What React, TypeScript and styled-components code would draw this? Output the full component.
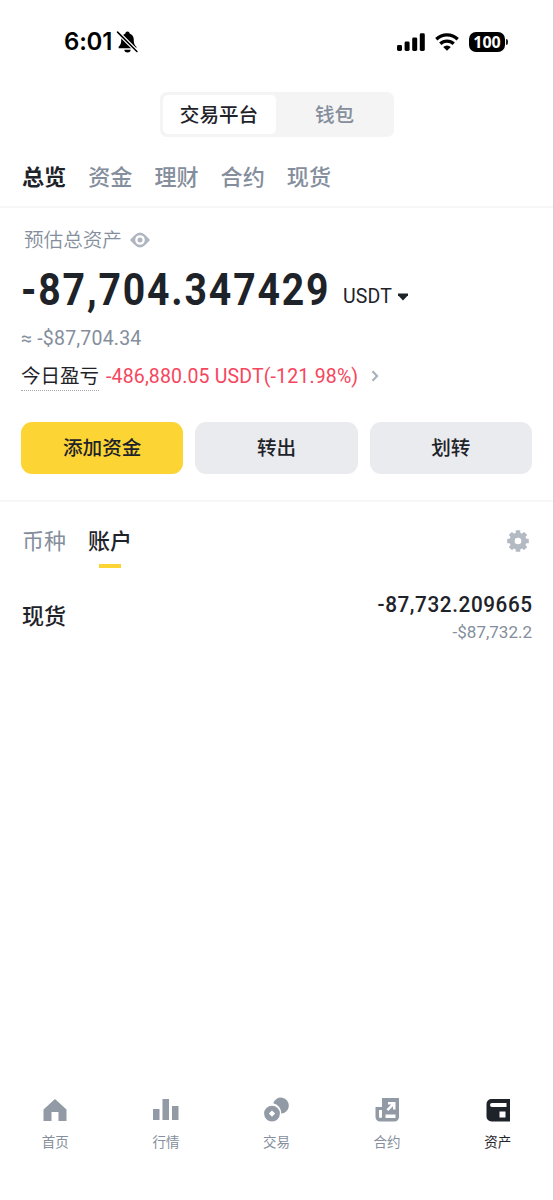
import React from 'react';
import styled, { createGlobalStyle } from 'styled-components';

const ink = '#1e2329';
const slate = '#848e9c';

const GlobalStyle = createGlobalStyle`
  * { box-sizing: border-box; }
  body { margin: 0; background: #fff; }
  button { border: 0; padding: 0; margin: 0; background: none; font: inherit; color: inherit; }
  svg { display: block; flex: none; }
`;

const Screen = styled.div`
  width: 554px;
  height: 1200px;
  display: flex;
  flex-direction: column;
  overflow: hidden;
  background: #fff;
  border-right: 1px solid #cfcfcf;
  color: ${ink};
  font-family: Roboto, 'Noto Sans CJK SC', sans-serif;
  white-space: nowrap;
`;

const StatusBar = styled.header`
  height: 92px;
  padding: 24px 45px 0 64px;
  display: flex;
  align-items: flex-start;
  justify-content: space-between;
  color: #000;
`;

const Clock = styled.div`
  display: flex;
  align-items: center;
  gap: 4px;
  height: 35px;
  font: 560 24px/35px Inter, sans-serif;
  letter-spacing: -0.2px;
`;

const Signals = styled.div`
  display: flex;
  align-items: center;
  height: 35px;
  gap: 10px;
`;

const Battery = styled.div`
  display: flex;
  align-items: center;
  gap: 1px;
`;

const BatteryBody = styled.div`
  width: 36px;
  height: 20px;
  border-radius: 7px;
  background: #000;
  color: #fff;
  text-align: center;
  font: 700 16px/20px 'Open Sans', sans-serif;
`;

const BatteryTip = styled.div`
  width: 2px;
  height: 6px;
  border-radius: 0 2px 2px 0;
  background: #222;
`;

const Segmented = styled.div`
  align-self: center;
  width: 234px;
  height: 45px;
  padding: 3px;
  display: flex;
  border-radius: 7px;
  background: #f4f4f4;
`;

const Segment = styled.button<{ $active?: boolean }>`
  flex: ${p => (p.$active ? '0 0 113px' : '1')};
  padding-top: 2px;
  padding-left: ${p => (p.$active ? '0' : '3px')};
  border-radius: 5px;
  background: ${p => (p.$active ? '#fff' : 'transparent')};
  color: ${p => (p.$active ? ink : slate)};
  font-size: 19.6px;
  font-weight: 500;
  line-height: 37px;
`;

const PrimaryTabs = styled.nav`
  height: 71px;
  padding: 24px 22px 0;
  display: flex;
  gap: 22px;
  border-bottom: 2px solid #f7f7f8;
`;

const PrimaryTab = styled.button<{ $active?: boolean }>`
  height: 32px;
  color: ${p => (p.$active ? ink : slate)};
  font-size: 22.1px;
  font-weight: ${p => (p.$active ? 700 : 500)};
  line-height: 32px;
`;

const Summary = styled.section`
  height: 294px;
  padding: 18px 21px 0;
  display: flex;
  flex-direction: column;
  border-bottom: 2px solid #f7f7f8;
`;

const Caption = styled.div`
  display: flex;
  align-items: center;
  gap: 8px;
  height: 30px;
  padding-left: 3px;
  color: ${slate};
  font-size: 19.6px;
  font-weight: 350;
  line-height: 30px;

  svg {
    margin-top: -2px;
  }
`;

const Balance = styled.div`
  display: flex;
  align-items: baseline;
  height: 60px;
  margin-top: 6px;
`;

const Amount = styled.span`
  width: 322px;
  font-size: 44.5px;
  font-weight: 700;
  line-height: 56px;
  letter-spacing: 2.1px;
  transform: scaleX(0.88);
  transform-origin: left;
`;

const Currency = styled.button`
  display: flex;
  align-items: center;
  gap: 6px;
  font-size: 19.5px;
  line-height: 24px;
  letter-spacing: 0.2px;
  font-weight: 450;
  transform: translateY(-2px);
`;

const Approx = styled.div`
  height: 30px;
  margin-top: 2px;
  color: ${slate};
  font-size: 19.5px;
  line-height: 30px;
  letter-spacing: 0.2px;
`;

const Pnl = styled.div`
  display: flex;
  align-items: flex-start;
  height: 32px;
  margin-top: 7px;
`;

const PnlLabel = styled.span`
  height: 30px;
  padding-top: 1px;
  font-size: 19.5px;
  line-height: 29px;
  border-bottom: 1px dotted #a5a9af;
`;

const PnlValue = styled.span`
  margin-left: 7px;
  width: 265px;
  color: #f6465d;
  font-size: 19.5px;
  line-height: 32px;
  letter-spacing: 0.15px;
`;

const Chevron = styled.svg`
  margin-top: 9px;
`;

const Actions = styled.div`
  display: grid;
  grid-template-columns: repeat(3, 1fr);
  gap: 12px;
  margin-top: 29px;
`;

const Action = styled.button<{ $primary?: boolean }>`
  height: 52px;
  padding-top: 2px;
  border-radius: 11px;
  background: ${p => (p.$primary ? '#fcd535' : '#eaebef')};
  font-size: 19.6px;
  font-weight: 500;
  line-height: 50px;
`;

const ListHeader = styled.div`
  display: flex;
  justify-content: space-between;
  height: 68px;
  padding: 24px 24px 0 22px;
`;

const ListTabs = styled.div`
  display: flex;
  gap: 22px;
`;

const ListTab = styled.button<{ $active?: boolean }>`
  display: flex;
  flex-direction: column;
  align-items: center;
  gap: 6px;
  height: 44px;
  color: ${p => (p.$active ? ink : slate)};
  font-size: 22px;
  font-weight: ${p => (p.$active ? 500 : 400)};
  line-height: 32px;
`;

const Underline = styled.span`
  width: 22px;
  height: 4px;
  background: #fcd535;
`;

const Gear = styled.svg`
  margin-top: 4px;
`;

const AccountRow = styled.div`
  display: flex;
  justify-content: space-between;
  padding: 19px 21px 0 22px;
  flex: 1;
`;

const AccountName = styled.span`
  height: 32px;
  margin-top: 12px;
  font-size: 22px;
  font-weight: 500;
  line-height: 32px;
`;

const AccountValues = styled.div`
  display: flex;
  flex-direction: column;
  align-items: flex-end;
`;

const AccountTotal = styled.span`
  font-size: 22.5px;
  font-weight: 500;
  line-height: 30px;
  letter-spacing: 0.65px;
  margin-right: -0.65px;
  transform: scaleX(0.92);
  transform-origin: right;
`;

const AccountFiat = styled.span`
  color: ${slate};
  font-size: 17px;
  line-height: 27px;
`;

const BottomNav = styled.nav`
  display: grid;
  grid-template-columns: repeat(5, 1fr);
  height: 103px;
  flex: none;
`;

const NavItem = styled.button<{ $active?: boolean }>`
  display: flex;
  flex-direction: column;
  align-items: center;
  gap: 9px;
  color: ${p => (p.$active ? ink : slate)};
  font-size: 13.5px;
  line-height: 20px;
`;

const icons = {
  home: <path fill="#929aa5" d="M14 2 2.500 12.500V24h8v-9h7v9h8V12.500Z" />,
  market: <path fill="#929aa5" d="M1 12h6.500v11H1zM10.500 2h6.500v21h-6.500zM20 9h6.500v14H20z" />,
  trade: (
    <g fill="#929aa5">
      <path d="M11.200 6.200A8 8 0 1 1 19.200 16.600A10 10 0 0 0 11.200 6.200Z" />
      <path fillRule="evenodd" d="M10 8.700a7.900 7.900 0 1 0 0 15.800a7.900 7.900 0 0 0 0-15.800Zm0 4.700 3.200 3.200-3.200 3.200-3.200-3.200Z" />
    </g>
  ),
  futures: (
    <path
      fill="#929aa5"
      fillRule="evenodd"
      d="M9 1h17v19a4.500 4.500 0 0 1-4.500 4.500H7A4.500 4.500 0 0 1 2.500 20V10H9Zm-3 12v6.500a1.500 1.500 0 0 0 3 0V13Zm6.500 4.500V21h10v-3.500ZM15 5v2.500h3.200l-4.700 4.700 1.800 1.800 4.700-4.700v3.200h2.500V5Z"
    />
  ),
  wallet: (
    <path
      fill={ink}
      fillRule="evenodd"
      d="M7.500 2H26v22.500H7.500A5 5 0 0 1 2.500 19.500V7a5 5 0 0 1 5-5Zm.5 4a2 2 0 0 0 0 4h14.500V6Zm7.500 8.500v6h6v-6Z"
    />
  ),
};

const navItems: { label: string; icon: keyof typeof icons; active?: boolean }[] = [
  { label: '首页', icon: 'home' },
  { label: '行情', icon: 'market' },
  { label: '交易', icon: 'trade' },
  { label: '合约', icon: 'futures' },
  { label: '资产', icon: 'wallet', active: true },
];

export default function App() {
  return (
    <>
      <GlobalStyle />
      <Screen>
        <StatusBar>
          <Clock>
            6:01
            <svg width="23" height="23" viewBox="0 0 22 22">
              <path d="M11 1.500c1.200 0 2 .8 2 1.800 2.500.8 4 3 4 5.700 0 4 .8 5.300 2.500 7v1.500h-17V16C4.200 14.300 5 13 5 9c0-2.700 1.500-4.900 4-5.700 0-1 .8-1.800 2-1.800ZM8 19h6a3 2.500 0 0 1-6 0Z" />
              <path d="m1.500 2 18.500 18.500" stroke="#fff" strokeWidth="3.800" />
              <path d="m1.500 2 18.500 18.500" stroke="#000" strokeWidth="1.500" strokeLinecap="round" />
            </svg>
          </Clock>
          <Signals>
            <svg width="28" height="18" viewBox="0 0 28 18">
              <rect x="0" y="12" width="5" height="6" rx="1.400" />
              <rect x="7.600" y="8.500" width="5" height="9.500" rx="1.400" />
              <rect x="15.200" y="4.500" width="5" height="13.500" rx="1.400" />
              <rect x="22.800" y="0.300" width="5" height="17.700" rx="1.400" />
            </svg>
            <svg width="24" height="18" viewBox="0 0 24 18">
              <g fill="none" stroke="#000" strokeWidth="3.300">
                <path d="M1.300 6.200a15.500 15.500 0 0 1 21.400 0" />
                <path d="M5.300 10.800a9.600 9.600 0 0 1 13.400 0" />
              </g>
              <path d="M12 17.800 8.200 14a5.500 5.500 0 0 1 7.600 0Z" />
            </svg>
            <Battery>
              <BatteryBody>100</BatteryBody>
              <BatteryTip />
            </Battery>
          </Signals>
        </StatusBar>

        <Segmented>
          <Segment $active>交易平台</Segment>
          <Segment>钱包</Segment>
        </Segmented>

        <PrimaryTabs>
          <PrimaryTab $active>总览</PrimaryTab>
          <PrimaryTab>资金</PrimaryTab>
          <PrimaryTab>理财</PrimaryTab>
          <PrimaryTab>合约</PrimaryTab>
          <PrimaryTab>现货</PrimaryTab>
        </PrimaryTabs>

        <Summary>
          <Caption>
            预估总资产
            <svg width="20" height="16" viewBox="0 0 20 16">
              <path
                fill="#b0b6c0"
                d="M0 8 4.500 3.200Q10-2.200 15.500 3.200L20 8l-4.500 4.800Q10 18.200 4.500 12.800Z"
              />
              <circle cx="10" cy="8" r="4.800" fill="#fff" />
              <circle cx="10" cy="8" r="2.500" fill="#b0b6c0" />
            </svg>
          </Caption>
          <Balance>
            <Amount>-87,704.347429</Amount>
            <Currency>
              USDT
              <svg width="10" height="8" viewBox="0 0 10 8">
                <path fill={ink} d="M0 0.500h10v1.800L5 7.500 0 2.300Z" />
              </svg>
            </Currency>
          </Balance>
          <Approx>≈ -$87,704.34</Approx>
          <Pnl>
            <PnlLabel>今日盈亏</PnlLabel>
            <PnlValue>-486,880.05 USDT(-121.98%)</PnlValue>
            <Chevron width="8" height="12" viewBox="0 0 8 12">
              <path d="m1.500 1.300 4.500 4.700-4.500 4.700" fill="none" stroke="#aab1bb" strokeWidth="2.200" />
            </Chevron>
          </Pnl>
          <Actions>
            <Action $primary>添加资金</Action>
            <Action>转出</Action>
            <Action>划转</Action>
          </Actions>
        </Summary>

        <ListHeader>
          <ListTabs>
            <ListTab>币种</ListTab>
            <ListTab $active>
              账户
              <Underline />
            </ListTab>
          </ListTabs>
          <Gear width="22" height="22" viewBox="0 0 22 22">
            <g fill="#b3bac4">
              {[0, 45, 90, 135].map(a => (
                <rect key={a} x="8.700" y="0.200" width="4.600" height="21.600" rx="0.600" transform={`rotate(${a} 11 11)`} />
              ))}
              <circle cx="11" cy="11" r="8.600" />
            </g>
            <circle cx="11" cy="11" r="3.300" fill="#fff" />
          </Gear>
        </ListHeader>

        <AccountRow>
          <AccountName>现货</AccountName>
          <AccountValues>
            <AccountTotal>-87,732.209665</AccountTotal>
            <AccountFiat>-$87,732.2</AccountFiat>
          </AccountValues>
        </AccountRow>

        <BottomNav>
          {navItems.map(item => (
            <NavItem key={item.label} $active={item.active}>
              <svg width="28" height="26" viewBox="0 0 28 26">
                {icons[item.icon]}
              </svg>
              {item.label}
            </NavItem>
          ))}
        </BottomNav>
      </Screen>
    </>
  );
}
